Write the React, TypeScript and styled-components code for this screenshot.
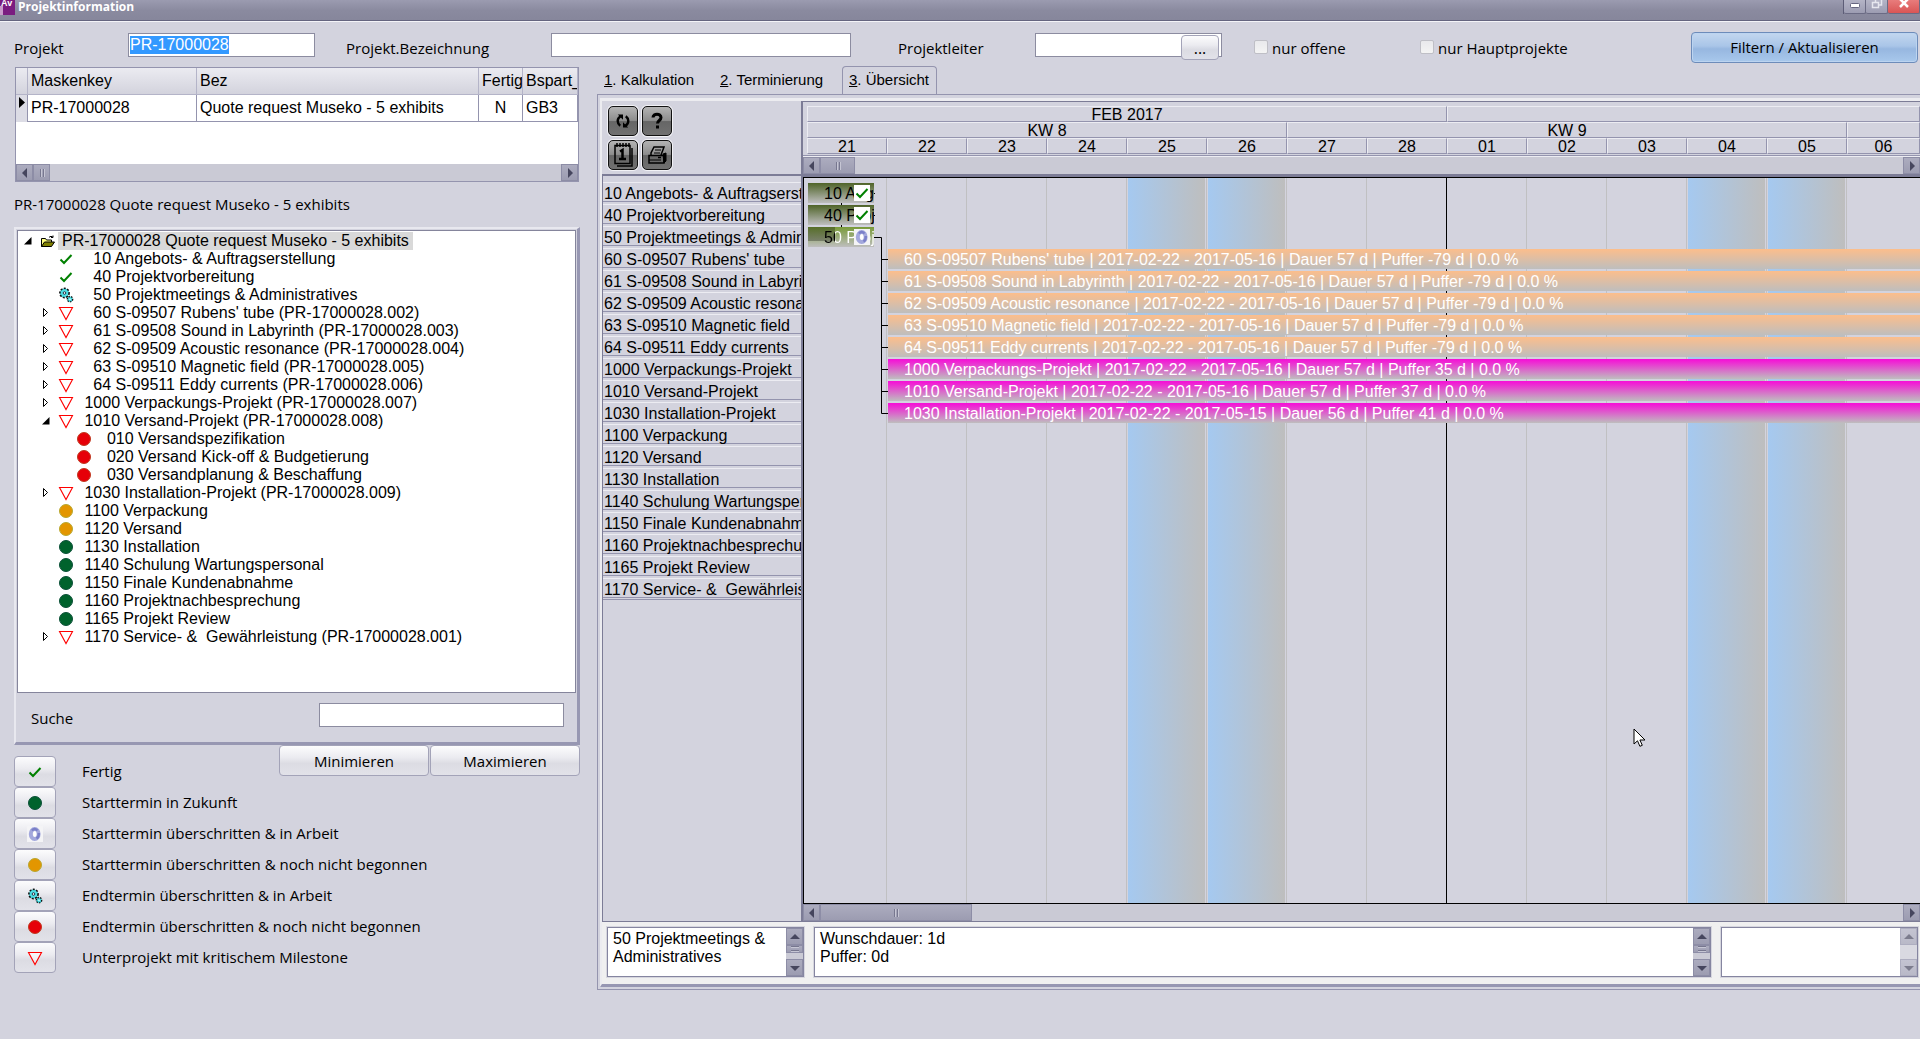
import React from "react";
import styled, { createGlobalStyle, css } from "styled-components";

const ui = `"Open Sans", "Noto Sans", sans-serif`;
const arial = `"Liberation Sans", Arial, sans-serif`;

const color = {
  face: "#d3d3de",
  light: "#ececf2",
  line: "#9494ae",
  dark: "#7c7c96",
  track: "#cacad5",
};

const Global = createGlobalStyle`
  *, *::before, *::after { box-sizing: border-box; }
  body { margin: 0; background: ${color.face}; color: #000; font: 16px/18px ${arial}; overflow: hidden; }
  button, input, textarea { font: inherit; color: inherit; margin: 0; }
  ul { list-style: none; margin: 0; padding: 0; }
`;

const Page = styled.div`
  display: flex;
  flex-direction: column;
  min-height: 100vh;
`;

const TitleBar = styled.header`
  display: flex;
  align-items: flex-start;
  height: 22px;
  flex: none;
  background: linear-gradient(#9b9bb0, #8a8a9f 50%, #86869b);
  border-bottom: 1px solid #f4f4f8;
  box-shadow: inset 0 -1px 0 #65657f;
`;

const Title = styled.h1`
  flex: 1;
  margin: 0 0 0 3px;
  color: #fff;
  font: 700 12px/14px ${ui};
`;

const WindowButtons = styled.div`
  display: flex;
  height: 14px;
  border-left: 1px solid #5d5d77;
`;

const WindowButton = styled.button<{ $close?: boolean }>`
  display: flex;
  align-items: flex-start;
  justify-content: center;
  width: ${(p) => (p.$close ? 32 : 22)}px;
  padding: 0;
  border: 0;
  border-right: 1px solid #6b6b84;
  border-bottom: 1px solid #6b6b84;
  border-radius: 0 0 2px 2px;
  background: ${(p) => (p.$close ? "linear-gradient(#e87c7c, #d95555)" : "linear-gradient(#b4b4c6, #9c9cb2)")};
`;

const FilterBar = styled.form`
  display: flex;
  align-items: flex-start;
  height: 44px;
  padding: 10px 2px 0 14px;
  font: 15px/32px ${ui};
  white-space: nowrap;
`;

const FieldLabel = styled.label<{ $w: number }>`
  width: ${(p) => p.$w}px;
  flex: none;
`;

const inputBox = css`
  height: 24px;
  border: 1px solid #8c8ca0;
  background: #fff;
  outline: 0;
`;

const TextInput = styled.input<{ $w: number; $end?: number }>`
  ${inputBox}
  width: ${(p) => p.$w}px;
  margin: 1px ${(p) => p.$end ?? 0}px 0 0;
  padding: 0 1px 1px;
  font: 16px/18px ${arial};
  &::selection { background: #3399ff; color: #fff; }
`;

const Lookup = styled.div`
  ${inputBox}
  display: flex;
  flex: none;
  width: 187px;
  margin: 1px 32px 0 0;
  padding: 1px 2px 0 0;
`;

const LookupInput = styled.input`
  flex: 1;
  min-width: 0;
  height: 20px;
  border: 0;
  outline: 0;
  background: transparent;
`;

const buttonFace = css`
  border: 1px solid #a3a3b8;
  border-radius: 4px;
  background: linear-gradient(#fcfcfd, #ebebf0 40%, #dcdce3 60%, #e2e2e9);
  padding: 0;
`;

const LookupButton = styled.button`
  ${buttonFace}
  width: 38px;
  height: 25px;
  font: 16px/20px ${ui};
`;

const Check = styled.label<{ $w: number }>`
  display: flex;
  align-items: flex-start;
  gap: 4px;
  width: ${(p) => p.$w}px;
`;

const CheckInput = styled.input`
  appearance: none;
  width: 14px;
  height: 14px;
  margin: 8px 0 0 !important;
  border: 1px solid #bfbfc6;
  border-radius: 2px;
  background: linear-gradient(#e9e9ec, #f4f4f4);
`;

const FilterButton = styled.button`
  width: 227px;
  height: 31px;
  margin-left: auto !important;
  padding: 0 0 2px;
  line-height: 28px;
  border: 1px solid #6d8cba;
  border-radius: 4px;
  background: linear-gradient(#c3d7ef, #a9c5e8 45%, #97b7e0 55%, #a8c8ec);
  box-shadow: inset 0 0 0 1px #bcd4f0;
`;

const Main = styled.main`
  display: flex;
  flex: 1;
  gap: 17px;
  padding-left: 14px;
`;

const Left = styled.section`
  flex: none;
  width: 566px;
  padding-top: 1px;
`;

const GridBox = styled.div`
  display: flex;
  flex-direction: column;
  justify-content: space-between;
  height: 115px;
  margin: 0 1px;
  border: 1px solid ${color.line};
  background: #fff;
  overflow: hidden;
`;

const DataTable = styled.table`
  width: 562px;
  table-layout: fixed;
  border-collapse: separate;
  border-spacing: 0;
`;

const HeadCell = styled.th`
  height: 27px;
  padding: 0 3px;
  border-right: 1px solid #b4b4c8;
  border-bottom: 1px solid #b4b4c8;
  background: linear-gradient(#ebebf1, #d3d3dd);
  font-weight: 400;
  text-align: left;
  white-space: nowrap;
  overflow: hidden;
`;

const Cell = styled.td<{ $center?: boolean }>`
  height: 27px;
  padding: 0 3px;
  border-right: 1px solid ${color.line};
  border-bottom: 1px solid ${color.line};
  text-align: ${(p) => (p.$center ? "center" : "left")};
  white-space: nowrap;
`;

const MarkerCell = styled.td`
  padding: 2px 0 0 2px;
  vertical-align: top;
  line-height: 0;
  border-right: 1px solid ${color.line};
  background: #dcdce5;
`;

const Caption = styled.h2`
  margin: 0;
  padding-bottom: 1px;
  font: 400 15px/44px ${ui};
`;

const TreePanel = styled.div`
  border: solid;
  border-width: 2px 3px 3px 2px;
  border-color: #e8e8ef #9797b2 #9797b2 #e8e8ef;
  padding: 1px 1px 0;
`;

const Tree = styled.ul`
  height: 463px;
  padding-top: 1px;
  border: 1px solid #85859c;
  background: #fff;
`;

const TreeRow = styled.li<{ $level: number }>`
  display: flex;
  align-items: center;
  height: 18px;
  padding-left: ${(p) => 3 + p.$level * 18}px;
  white-space: pre;
`;

const ExpanderSlot = styled.span`
  display: flex;
  flex: none;
  width: 18px;
  padding-left: 2px;
`;

const IconSlot = styled.span`
  display: flex;
  flex: none;
  width: 18px;
  margin-right: 1px;
  justify-content: center;
`;

const TreeText = styled.span<{ $selected?: boolean }>`
  padding: 0 4px;
  background: ${(p) => (p.$selected ? "#d9d9d9" : "transparent")};
`;

const SearchRow = styled.div`
  display: flex;
  justify-content: space-between;
  height: 49px;
  padding: 9px 12px 0 14px;
  font: 15px/32px ${ui};
`;

const BelowTree = styled.div`
  display: flex;
  align-items: flex-start;
`;

const Legend = styled.ul`
  flex: 1;
  min-width: 0;
  padding-top: 11px;
  font: 15px/31px ${ui};
  white-space: nowrap;
`;

const LegendRow = styled.li`
  display: flex;
  gap: 26px;
  height: 31px;
`;

const LegendButton = styled.button`
  ${buttonFace}
  display: flex;
  flex: none;
  align-items: center;
  justify-content: center;
  width: 42px;
  height: 31px;
`;

const Pair = styled.div`
  display: flex;
  flex: none;
  gap: 1px;
`;

const WideButton = styled.button`
  ${buttonFace}
  width: 150px;
  height: 31px;
  font: 15px/28px ${ui};
`;

const Right = styled.section`
  display: flex;
  flex: 1;
  flex-direction: column;
  min-width: 0;
  padding-bottom: 49px;
`;

const Tabs = styled.nav`
  display: flex;
  height: 28px;
`;

const Tab = styled.button<{ $active?: boolean; $w: number }>`
  width: ${(p) => p.$w}px;
  padding: 0 6px 2px;
  border: 1px solid ${(p) => (p.$active ? color.line : "transparent")};
  border-bottom: 0;
  border-radius: 4px 4px 0 0;
  background: transparent;
  font-size: 15px;
  text-align: left;
  white-space: nowrap;
`;

const Panel = styled.div`
  display: flex;
  flex: 1;
  flex-direction: column;
  border: 1px solid ${color.line};
  border-right: 0;
  padding: 3px 0 2px 2px;
`;

const PanelInner = styled.div`
  display: flex;
  flex: 1;
  flex-direction: column;
  border: solid;
  border-width: 3px 0 3px 2px;
  border-color: #ececf0 #9797b2 #9797b2 #ececf0;
  background: #f0f0f0;
`;

const Gantt = styled.div`
  display: flex;
  flex: 1;
  background: ${color.face};
  border-bottom: 1px solid ${color.dark};
`;

const TaskPane = styled.div`
  display: flex;
  flex-direction: column;
  flex: none;
  width: 201px;
  border-right: 2px solid ${color.dark};
`;

const Tools = styled.div`
  display: grid;
  grid-template-columns: repeat(2, 30px);
  grid-auto-rows: 30px;
  gap: 4px;
  height: 75px;
  padding: 5px 0 0 6px;
  border-bottom: 2px solid ${color.dark};
`;

const ToolButton = styled.button`
  display: flex;
  align-items: center;
  justify-content: center;
  padding: 0;
  border: 1px solid #111;
  border-radius: 5px;
  background: linear-gradient(#b4b4b4, #8d8d8d 48%, #666 52%, #707070);
  box-shadow: 0 0 0 1px #f2f2f6;
`;

const TaskList = styled.ul`
  flex: 1;
  padding-top: 6px;
  border-left: 1px solid ${color.dark};
  overflow: hidden;
`;

const Task = styled.li`
  height: 20px;
  margin-bottom: 2px;
  padding-left: 1px;
  border-top: 1px solid ${color.light};
  border-bottom: 1px solid ${color.line};
  line-height: 22px;
  white-space: pre;
  &:last-child { box-shadow: 0 1px 0 ${color.face}, 0 2px 0 ${color.line}; }
`;

const ChartPane = styled.div`
  display: flex;
  flex: 1;
  flex-direction: column;
  min-width: 0;
  border-top: 1px solid ${color.dark};
`;

const Timeline = styled.div`
  display: flex;
  flex-direction: column;
  height: 54px;
  padding: 4px 0 0 4px;
  border-bottom: 1px solid ${color.line};
`;

const Scale = styled.div`
  display: flex;
  height: 16px;
`;

const ScaleCell = styled.div<{ $days?: number }>`
  flex: ${(p) => (p.$days ? `0 0 ${p.$days * 80}px` : "1 1 0")};
  border: 1px solid;
  border-color: ${color.light} ${color.line} ${color.line} ${color.light};
  line-height: 16px;
  text-align: center;
`;

const Track = styled.div<{ $framed?: boolean }>`
  display: flex;
  flex: none;
  height: 17px;
  background: ${color.track};
  ${(p) => p.$framed && css`
    height: 21px;
    border-top: 1px solid ${color.light};
    border-bottom: 3px solid ${color.dark};
  `}
`;

const VTrack = styled.div<{ $off?: boolean }>`
  display: flex;
  flex-direction: column;
  flex: none;
  width: 17px;
  background: ${color.track};
  opacity: ${(p) => (p.$off ? 0.7 : 1)};
`;

const Knob = styled.button<{ $w: number; $h: number; $push?: boolean }>`
  display: flex;
  align-items: center;
  justify-content: center;
  flex: none;
  width: ${(p) => p.$w}px;
  height: ${(p) => p.$h}px;
  padding: 0;
  border: 1px solid #8d8da6;
  background: linear-gradient(#acacbf, #9c9cb1);
  ${(p) => p.$push && "margin: auto 0 0 auto !important;"}
`;

const Canvas = styled.div`
  position: relative;
  flex: 1;
  min-height: 420px;
  border: solid #000;
  border-width: 1px 0 1px 1px;
  overflow: hidden;
`;

const Days = styled.div`
  position: absolute;
  inset: 0 0 0 3px;
  display: flex;
`;

const Day = styled.div<{ $weekend?: boolean; $monthEnd?: boolean; $last?: boolean }>`
  flex: ${(p) => (p.$last ? "1 1 0" : "0 0 80px")};
  border-right: 1px solid ${(p) => (p.$monthEnd ? "#000" : p.$last ? "transparent" : "#c0c0c2")};
  padding: 0 1px;
  background: ${(p) => (p.$weekend ? "linear-gradient(90deg, #a5c9f0, #bebebe) content-box" : "transparent")};
`;

const Bars = styled.div`
  position: relative;
  display: flex;
  flex-direction: column;
  gap: 2px;
  padding: 5px 0 0 4px;
`;

const tones = {
  done: "linear-gradient(#4f6428, #bebebe)",
  started: "linear-gradient(90deg, #00000048 27px, transparent 27px) top / 100% 14px no-repeat, linear-gradient(#789a38, #bebebe)",
  orange: "linear-gradient(#fcbe8c, #bebebe)",
  pink: "linear-gradient(#f414d6 5%, #bebebe)",
};

const Bar = styled.div<{ $tone: keyof typeof tones }>`
  height: 20px;
  padding-left: 16px;
  background: ${(p) => tones[p.$tone]};
  color: #fff;
  line-height: 22px;
  white-space: nowrap;
  ${(p) => p.$tone === "done" || p.$tone === "started"
    ? css`display: flex; width: 66px; color: #000;`
    : css`margin-left: 80px;`}
`;

const BarText = styled.span<{ $split?: boolean }>`
  width: 50px;
  overflow: hidden;
  ${(p) => p.$split && css`
    background: linear-gradient(90deg, #000 11px, #fff 11px);
    background-clip: text;
    color: transparent;
  `}
`;

const Badge = styled.span`
  position: absolute;
  left: 50px;
  display: flex;
  align-items: center;
  justify-content: center;
  width: 16px;
  height: 16px;
  margin-top: 2px;
  background: #fff;
`;

const Links = styled.svg`
  position: absolute;
  left: 0;
  top: 0;
`;

const Pointer = styled.svg`
  position: absolute;
  left: 829px;
  top: 550px;
`;

const Notes = styled.div`
  display: flex;
  gap: 10px;
  height: 62px;
  padding: 5px 2px 7px 5px;
`;

const Note = styled.div<{ $grow?: boolean }>`
  display: flex;
  flex: ${(p) => (p.$grow ? "1 1 0" : "0 0 197px")};
  min-width: 0;
  border: 1px solid #8585a0;
  outline: 1px solid #d6d6de;
  background: #fff;
`;

const NoteText = styled.textarea`
  flex: 1;
  min-width: 0;
  width: 0;
  padding: 2px 0 0 5px;
  border: 0;
  outline: 0;
  resize: none;
  overflow: hidden;
  background: transparent;
`;

const Check16 = () => (
  <svg width="14" height="14" viewBox="0 0 14 14"><path d="M1.5 7.5 5 11 12.5 3" fill="none" stroke="#008000" strokeWidth="2" /></svg>
);
const Dot = ({ fill, edge }: { fill: string; edge: string }) => (
  <svg width="16" height="16" viewBox="0 0 16 16"><circle cx="8" cy="8" r="6.5" fill={fill} stroke={edge} /></svg>
);
const Critical = () => (
  <svg width="16" height="16" viewBox="0 0 16 16"><path d="M1.5 2.5h13L8 14.5z" fill="#fff" fillOpacity=".5" stroke="#f00" strokeWidth="1.1" /></svg>
);
const Gears = () => (
  <svg width="16" height="16" viewBox="0 0 16 16">
    <circle cx="6.5" cy="6" r="4.6" fill="#3fd6dc" stroke="#111" strokeWidth="1.6" strokeDasharray="2 1.4" />
    <circle cx="6.5" cy="6" r="3.4" fill="#4fdfe4" />
    <circle cx="6.5" cy="6" r="1.3" fill="#fff" stroke="#234" />
    <circle cx="12" cy="12.2" r="2.7" fill="#3fd6dc" stroke="#111" strokeWidth="1.3" strokeDasharray="1.5 1.2" />
    <circle cx="12" cy="12.2" r=".8" fill="#fff" />
  </svg>
);
const Ring = () => (
  <svg width="16" height="16" viewBox="0 0 16 16">
    <rect width="16" height="16" fill="#f4f4f6" />
    <ellipse cx="7.7" cy="8" rx="3.9" ry="5" fill="none" stroke="#a3a8dc" strokeWidth="4" />
    <path d="M5 4.500Q7.500 1.500 10.500 4.500M11.800 7Q12 11 9.500 12.500" fill="none" stroke="#7a7fc8" strokeWidth="2.400" />
    <ellipse cx="7.900" cy="8" rx="1.500" ry="2.800" fill="#fff" />
  </svg>
);
const Folder = () => (
  <svg width="14" height="13" viewBox="0 0 14 13">
    <path d="M.5 11.5v-8h4l1 1.5h5v2" fill="#ffff80" stroke="#000" />
    <path d="M.5 11.5 3.500 7h10l-3 4.500z" fill="#808000" stroke="#000" />
    <path d="M8 2.500c1-1.500 3-1.500 4 0m0-2v2h-2" fill="none" stroke="#000" />
  </svg>
);

const Expander = ({ open }: { open: boolean }) => (
  <svg width="10" height="10" viewBox="0 0 10 10">
    {open ? <path d="M8.500 1v7.500H1z" fill="#000" /> : <path d="M2.500 0.500v8L6.500 4.500z" fill="#fff" stroke="#000" />}
  </svg>
);

const arrows = { left: "M7 0v10L2 5z", right: "M3 0v10l5-5z", up: "M0 7h10L5 2z", down: "M0 3h10L5 8z" };
const Arrow = ({ to }: { to: keyof typeof arrows }) => (
  <svg width="10" height="10" viewBox="0 0 10 10"><path d={arrows[to]} fill="#46465e" /></svg>
);
const Grip = ({ flat }: { flat?: boolean }) => (
  <svg width="8" height="8" viewBox="0 0 8 8">
    <path d={flat ? "M0 1.500h8M0 5.500h8" : "M2.500 0v8M5.500 0v8"} stroke="#77778f" />
    <path d={flat ? "M0 2.500h8M0 6.500h8" : "M3.500 0v8M6.500 0v8"} stroke="#c6c6d4" />
  </svg>
);

type Icon = "check" | "gears" | "critical" | "red" | "amber" | "green" | "ring" | "folder";
const icons: Record<Icon, React.ReactNode> = {
  check: <Check16 />,
  gears: <Gears />,
  critical: <Critical />,
  red: <Dot fill="#e60008" edge="#c03a20" />,
  amber: <Dot fill="#e39600" edge="#b8a830" />,
  green: <Dot fill="#00622c" edge="#0b5038" />,
  ring: <Ring />,
  folder: <Folder />,
};

const tree: { level: number; icon: Icon; text: string; open?: boolean }[] = [
  { level: 0, icon: "folder", text: "PR-17000028 Quote request Museko - 5 exhibits", open: true },
  { level: 1, icon: "check", text: "   10 Angebots- & Auftragserstellung" },
  { level: 1, icon: "check", text: "   40 Projektvorbereitung" },
  { level: 1, icon: "gears", text: "   50 Projektmeetings & Administratives" },
  { level: 1, icon: "critical", text: "   60 S-09507 Rubens' tube (PR-17000028.002)", open: false },
  { level: 1, icon: "critical", text: "   61 S-09508 Sound in Labyrinth (PR-17000028.003)", open: false },
  { level: 1, icon: "critical", text: "   62 S-09509 Acoustic resonance (PR-17000028.004)", open: false },
  { level: 1, icon: "critical", text: "   63 S-09510 Magnetic field (PR-17000028.005)", open: false },
  { level: 1, icon: "critical", text: "   64 S-09511 Eddy currents (PR-17000028.006)", open: false },
  { level: 1, icon: "critical", text: " 1000 Verpackungs-Projekt (PR-17000028.007)", open: false },
  { level: 1, icon: "critical", text: " 1010 Versand-Projekt (PR-17000028.008)", open: true },
  { level: 2, icon: "red", text: "  010 Versandspezifikation" },
  { level: 2, icon: "red", text: "  020 Versand Kick-off & Budgetierung" },
  { level: 2, icon: "red", text: "  030 Versandplanung & Beschaffung" },
  { level: 1, icon: "critical", text: " 1030 Installation-Projekt (PR-17000028.009)", open: false },
  { level: 1, icon: "amber", text: " 1100 Verpackung" },
  { level: 1, icon: "amber", text: " 1120 Versand" },
  { level: 1, icon: "green", text: " 1130 Installation" },
  { level: 1, icon: "green", text: " 1140 Schulung Wartungspersonal" },
  { level: 1, icon: "green", text: " 1150 Finale Kundenabnahme" },
  { level: 1, icon: "green", text: " 1160 Projektnachbesprechung" },
  { level: 1, icon: "green", text: " 1165 Projekt Review" },
  { level: 1, icon: "critical", text: " 1170 Service- &  Gewährleistung (PR-17000028.001)", open: false },
];

const legend: [Icon, string][] = [
  ["check", "Fertig"],
  ["green", "Starttermin in Zukunft"],
  ["ring", "Starttermin überschritten & in Arbeit"],
  ["amber", "Starttermin überschritten & noch nicht begonnen"],
  ["gears", "Endtermin überschritten & in Arbeit"],
  ["red", "Endtermin überschritten & noch nicht begonnen"],
  ["critical", "Unterprojekt mit kritischem Milestone"],
];

const tasks = [
  "10 Angebots- & Auftragserstellung", "40 Projektvorbereitung", "50 Projektmeetings & Administratives",
  "60 S-09507 Rubens' tube", "61 S-09508 Sound in Labyrinth", "62 S-09509 Acoustic resonance",
  "63 S-09510 Magnetic field", "64 S-09511 Eddy currents", "1000 Verpackungs-Projekt", "1010 Versand-Projekt",
  "1030 Installation-Projekt", "1100 Verpackung", "1120 Versand", "1130 Installation",
  "1140 Schulung Wartungspersonal", "1150 Finale Kundenabnahme", "1160 Projektnachbesprechung",
  "1165 Projekt Review", "1170 Service- &  Gewährleistung",
];

const bars: { tone: "orange" | "pink"; text: string }[] = [
  { tone: "orange", text: "60 S-09507 Rubens' tube | 2017-02-22 - 2017-05-16 | Dauer 57 d | Puffer -79 d | 0.0 %" },
  { tone: "orange", text: "61 S-09508 Sound in Labyrinth | 2017-02-22 - 2017-05-16 | Dauer 57 d | Puffer -79 d | 0.0 %" },
  { tone: "orange", text: "62 S-09509 Acoustic resonance | 2017-02-22 - 2017-05-16 | Dauer 57 d | Puffer -79 d | 0.0 %" },
  { tone: "orange", text: "63 S-09510 Magnetic field | 2017-02-22 - 2017-05-16 | Dauer 57 d | Puffer -79 d | 0.0 %" },
  { tone: "orange", text: "64 S-09511 Eddy currents | 2017-02-22 - 2017-05-16 | Dauer 57 d | Puffer -79 d | 0.0 %" },
  { tone: "pink", text: "1000 Verpackungs-Projekt | 2017-02-22 - 2017-05-16 | Dauer 57 d | Puffer 35 d | 0.0 %" },
  { tone: "pink", text: "1010 Versand-Projekt | 2017-02-22 - 2017-05-16 | Dauer 57 d | Puffer 37 d | 0.0 %" },
  { tone: "pink", text: "1030 Installation-Projekt | 2017-02-22 - 2017-05-15 | Dauer 56 d | Puffer 41 d | 0.0 %" },
];

const days = ["21", "22", "23", "24", "25", "26", "27", "28", "01", "02", "03", "04", "05", "06"];
const weekend = ["25", "26", "04", "05"];

const ScrollBar = ({ thumb, framed }: { thumb: number; framed?: boolean }) => (
  <Track $framed={framed}>
    <Knob type="button" aria-label="Nach links" $w={17} $h={17}><Arrow to="left" /></Knob>
    <Knob type="button" aria-label="Bildlauf" $w={thumb} $h={17}><Grip /></Knob>
    <Knob type="button" aria-label="Nach rechts" $w={17} $h={17} $push><Arrow to="right" /></Knob>
  </Track>
);

const NoteScroll = ({ off }: { off?: boolean }) => (
  <VTrack $off={off}>
    <Knob type="button" aria-label="Nach oben" $w={17} $h={17}><Arrow to="up" /></Knob>
    {!off && <Knob type="button" aria-label="Bildlauf" $w={17} $h={8}><Grip flat /></Knob>}
    <Knob type="button" aria-label="Nach unten" $w={17} $h={17} $push><Arrow to="down" /></Knob>
  </VTrack>
);

export default function App() {
  const project = React.useRef<HTMLInputElement>(null);
  React.useEffect(() => {
    project.current?.focus();
    project.current?.select();
  }, []);

  return (
    <Page>
      <Global />
      <TitleBar>
        <svg width="15" height="15" viewBox="0 0 15 15">
          <rect width="15" height="15" fill="#7a1c80" />
          <path d="M0 6h3v9H0z" fill="#c99acb" />
          <text x="1" y="6" fill="#fff" fontSize="9" fontWeight="700" fontFamily="Liberation Sans">Av</text>
        </svg>
        <Title>Projektinformation</Title>
        <WindowButtons>
          <WindowButton type="button" aria-label="Fenster verkleinern">
            <svg width="12" height="10"><rect x="1.500" y="3.500" width="9" height="4" rx="1" fill="#fff" stroke="#666680" /></svg>
          </WindowButton>
          <WindowButton type="button" aria-label="Fenster wiederherstellen">
            <svg width="12" height="10"><path d="M4.500 3V-1h6v6h-3M1.500 2.500h6v5h-6z" fill="none" stroke="#e6e6ee" strokeWidth="1.500" /></svg>
          </WindowButton>
          <WindowButton type="button" aria-label="Fenster schließen" $close>
            <svg width="12" height="10"><path d="M2-1l8 8M10-1 2 7" stroke="#fff" strokeWidth="2.500" /></svg>
          </WindowButton>
        </WindowButtons>
      </TitleBar>

      <FilterBar onSubmit={(e) => e.preventDefault()}>
        <FieldLabel $w={114} htmlFor="projekt">Projekt</FieldLabel>
        <TextInput ref={project} id="projekt" $w={187} $end={31} defaultValue="PR-17000028" />
        <FieldLabel $w={205} htmlFor="bez">Projekt.Bezeichnung</FieldLabel>
        <TextInput id="bez" $w={300} $end={47} />
        <FieldLabel $w={137} htmlFor="leiter">Projektleiter</FieldLabel>
        <Lookup>
          <LookupInput id="leiter" />
          <LookupButton type="button" aria-label="Projektleiter suchen">...</LookupButton>
        </Lookup>
        <Check $w={166}><CheckInput type="checkbox" />nur offene</Check>
        <Check $w={166}><CheckInput type="checkbox" />nur Hauptprojekte</Check>
        <FilterButton type="submit">Filtern / Aktualisieren</FilterButton>
      </FilterBar>

      <Main>
        <Left>
          <GridBox>
            <DataTable>
              <colgroup><col width="12" /><col width="169" /><col width="282" /><col width="44" /><col width="55" /></colgroup>
              <thead>
                <tr><HeadCell /><HeadCell>Maskenkey</HeadCell><HeadCell>Bez</HeadCell><HeadCell>Fertig</HeadCell><HeadCell>Bspart_</HeadCell></tr>
              </thead>
              <tbody>
                <tr>
                  <MarkerCell><svg width="8" height="12"><path d="M1 0v11l6-5.500z" /></svg></MarkerCell>
                  <Cell>PR-17000028</Cell><Cell>Quote request Museko - 5 exhibits</Cell><Cell $center>N</Cell><Cell>GB3</Cell>
                </tr>
              </tbody>
            </DataTable>
            <ScrollBar thumb={17} />
          </GridBox>

          <Caption>PR-17000028 Quote request Museko - 5 exhibits</Caption>

          <TreePanel>
            <Tree>
              {tree.map((n) => (
                <TreeRow key={n.text} $level={n.level}>
                  <ExpanderSlot>{n.open !== undefined && <Expander open={n.open} />}</ExpanderSlot>
                  <IconSlot>{icons[n.icon]}</IconSlot>
                  <TreeText $selected={n.level === 0}>{n.text}</TreeText>
                </TreeRow>
              ))}
            </Tree>
            <SearchRow>
              <label htmlFor="suche">Suche</label>
              <TextInput id="suche" $w={245} />
            </SearchRow>
          </TreePanel>

          <BelowTree>
            <Legend>
              {legend.map(([icon, text]) => (
                <LegendRow key={text}>
                  <LegendButton type="button" aria-label={text}>{icons[icon]}</LegendButton>
                  <span>{text}</span>
                </LegendRow>
              ))}
            </Legend>
            <Pair>
              <WideButton type="button">Minimieren</WideButton>
              <WideButton type="button">Maximieren</WideButton>
            </Pair>
          </BelowTree>
        </Left>

        <Right>
          <Tabs>
            <Tab type="button" $w={116}><u>1</u>. Kalkulation</Tab>
            <Tab type="button" $w={129}><u>2</u>. Terminierung</Tab>
            <Tab type="button" $w={95} $active><u>3</u>. Übersicht</Tab>
          </Tabs>
          <Panel>
            <PanelInner>
              <Gantt>
                <TaskPane>
                  <Tools>
                    <ToolButton type="button" aria-label="Aktualisieren">
                      <svg width="16" height="16" viewBox="0 0 20 20">
                        <path d="M7 4C2 7 2.500 13 6.500 16M13 16C18 13 17.500 7 13.500 4" fill="none" stroke="#000" strokeWidth="3" />
                        <path d="M3.500 2H10v6.500zM16.500 18H10v-6.500z" />
                      </svg>
                    </ToolButton>
                    <ToolButton type="button" aria-label="Hilfe">
                      <svg width="20" height="20" viewBox="0 0 20 20">
                        <path d="M6 6.500C6 2 14 2 14 6.500c0 3-3.500 3-3.500 6" fill="none" stroke="#000" strokeWidth="3" />
                        <rect x="9" y="14.500" width="3" height="3" />
                      </svg>
                    </ToolButton>
                    <ToolButton type="button" aria-label="Heute">
                      <svg width="24" height="26" viewBox="0 0 24 26">
                        <path d="M4 3.500h15v18H4zM6 24h15V6" fill="none" stroke="#000" strokeWidth="1.500" />
                        <path d="M6 1v4M9 1v4M12 1v4M15 1v4M18 1v4" stroke="#000" strokeWidth="1.500" />
                        <path d="M9 9.500l2.500-1.500v9M8 17h7" fill="none" stroke="#000" strokeWidth="2.500" />
                      </svg>
                    </ToolButton>
                    <ToolButton type="button" aria-label="Drucken">
                      <svg width="22" height="20" viewBox="0 0 22 20">
                        <path d="M5 10V8l3-6h10l-3 8" fill="none" stroke="#000" strokeWidth="1.500" />
                        <path d="M9 5h6M8 8h6" stroke="#000" />
                        <path d="M3 10.500h15V18H3z" fill="none" stroke="#000" strokeWidth="1.500" />
                        <path d="M3 15h12M17 9l3-1v8l-2 2z" fill="#000" stroke="#000" />
                        <path d="M12 12.500h3" stroke="#000" strokeWidth="1.500" />
                      </svg>
                    </ToolButton>
                  </Tools>
                  <TaskList>{tasks.map((t) => <Task key={t}>{t}</Task>)}</TaskList>
                </TaskPane>
                <ChartPane>
                  <Timeline>
                    <Scale><ScaleCell $days={8}>FEB 2017</ScaleCell><ScaleCell /></Scale>
                    <Scale><ScaleCell $days={6}>KW 8</ScaleCell><ScaleCell $days={7}>KW 9</ScaleCell><ScaleCell /></Scale>
                    <Scale>{days.map((d) => <ScaleCell key={d} $days={d === "06" ? undefined : 1}>{d}</ScaleCell>)}</Scale>
                  </Timeline>
                  <ScrollBar thumb={35} framed />
                  <Canvas>
                    <Days>
                      {days.map((d) => (
                        <Day key={d} $weekend={weekend.includes(d)} $monthEnd={d === "28"} $last={d === "06"} />
                      ))}
                    </Days>
                    <Links width="90" height="250" viewBox="0 0 90 250" fill="none" stroke="#000">
                      <path d="M37.500 25v2M37.500 47v2M70 15.500h1M70 37.500h1M70 59.500h7.500v176H84M78 81.500h6M78 103.500h6M78 125.500h6M78 147.500h6M78 169.500h6M78 191.500h6M78 213.500h6" />
                    </Links>
                    <Bars>
                      <Bar $tone="done"><BarText>10 Ang</BarText><Badge><Check16 /></Badge></Bar>
                      <Bar $tone="done"><BarText>40 Proj</BarText><Badge><Check16 /></Badge></Bar>
                      <Bar $tone="started"><BarText $split>50 Proj</BarText><Badge><Ring /></Badge></Bar>
                      {bars.map((b) => <Bar key={b.text} $tone={b.tone}>{b.text}</Bar>)}
                    </Bars>
                    <Pointer width="14" height="20" viewBox="0 0 14 20">
                      <path d="M1 1v15l3.500-3.200 2.400 5.500 2.400-1-2.400-5.300H12z" fill="#fff" stroke="#000" />
                    </Pointer>
                  </Canvas>
                  <ScrollBar thumb={152} />
                </ChartPane>
              </Gantt>
              <Notes>
                <Note><NoteText readOnly aria-label="Vorgang" value={"50 Projektmeetings &\nAdministratives"} /><NoteScroll /></Note>
                <Note $grow><NoteText readOnly aria-label="Details" value={"Wunschdauer: 1d\nPuffer: 0d"} /><NoteScroll /></Note>
                <Note><NoteText readOnly aria-label="Notiz" value="" /><NoteScroll off /></Note>
              </Notes>
            </PanelInner>
          </Panel>
        </Right>
      </Main>
    </Page>
  );
}
